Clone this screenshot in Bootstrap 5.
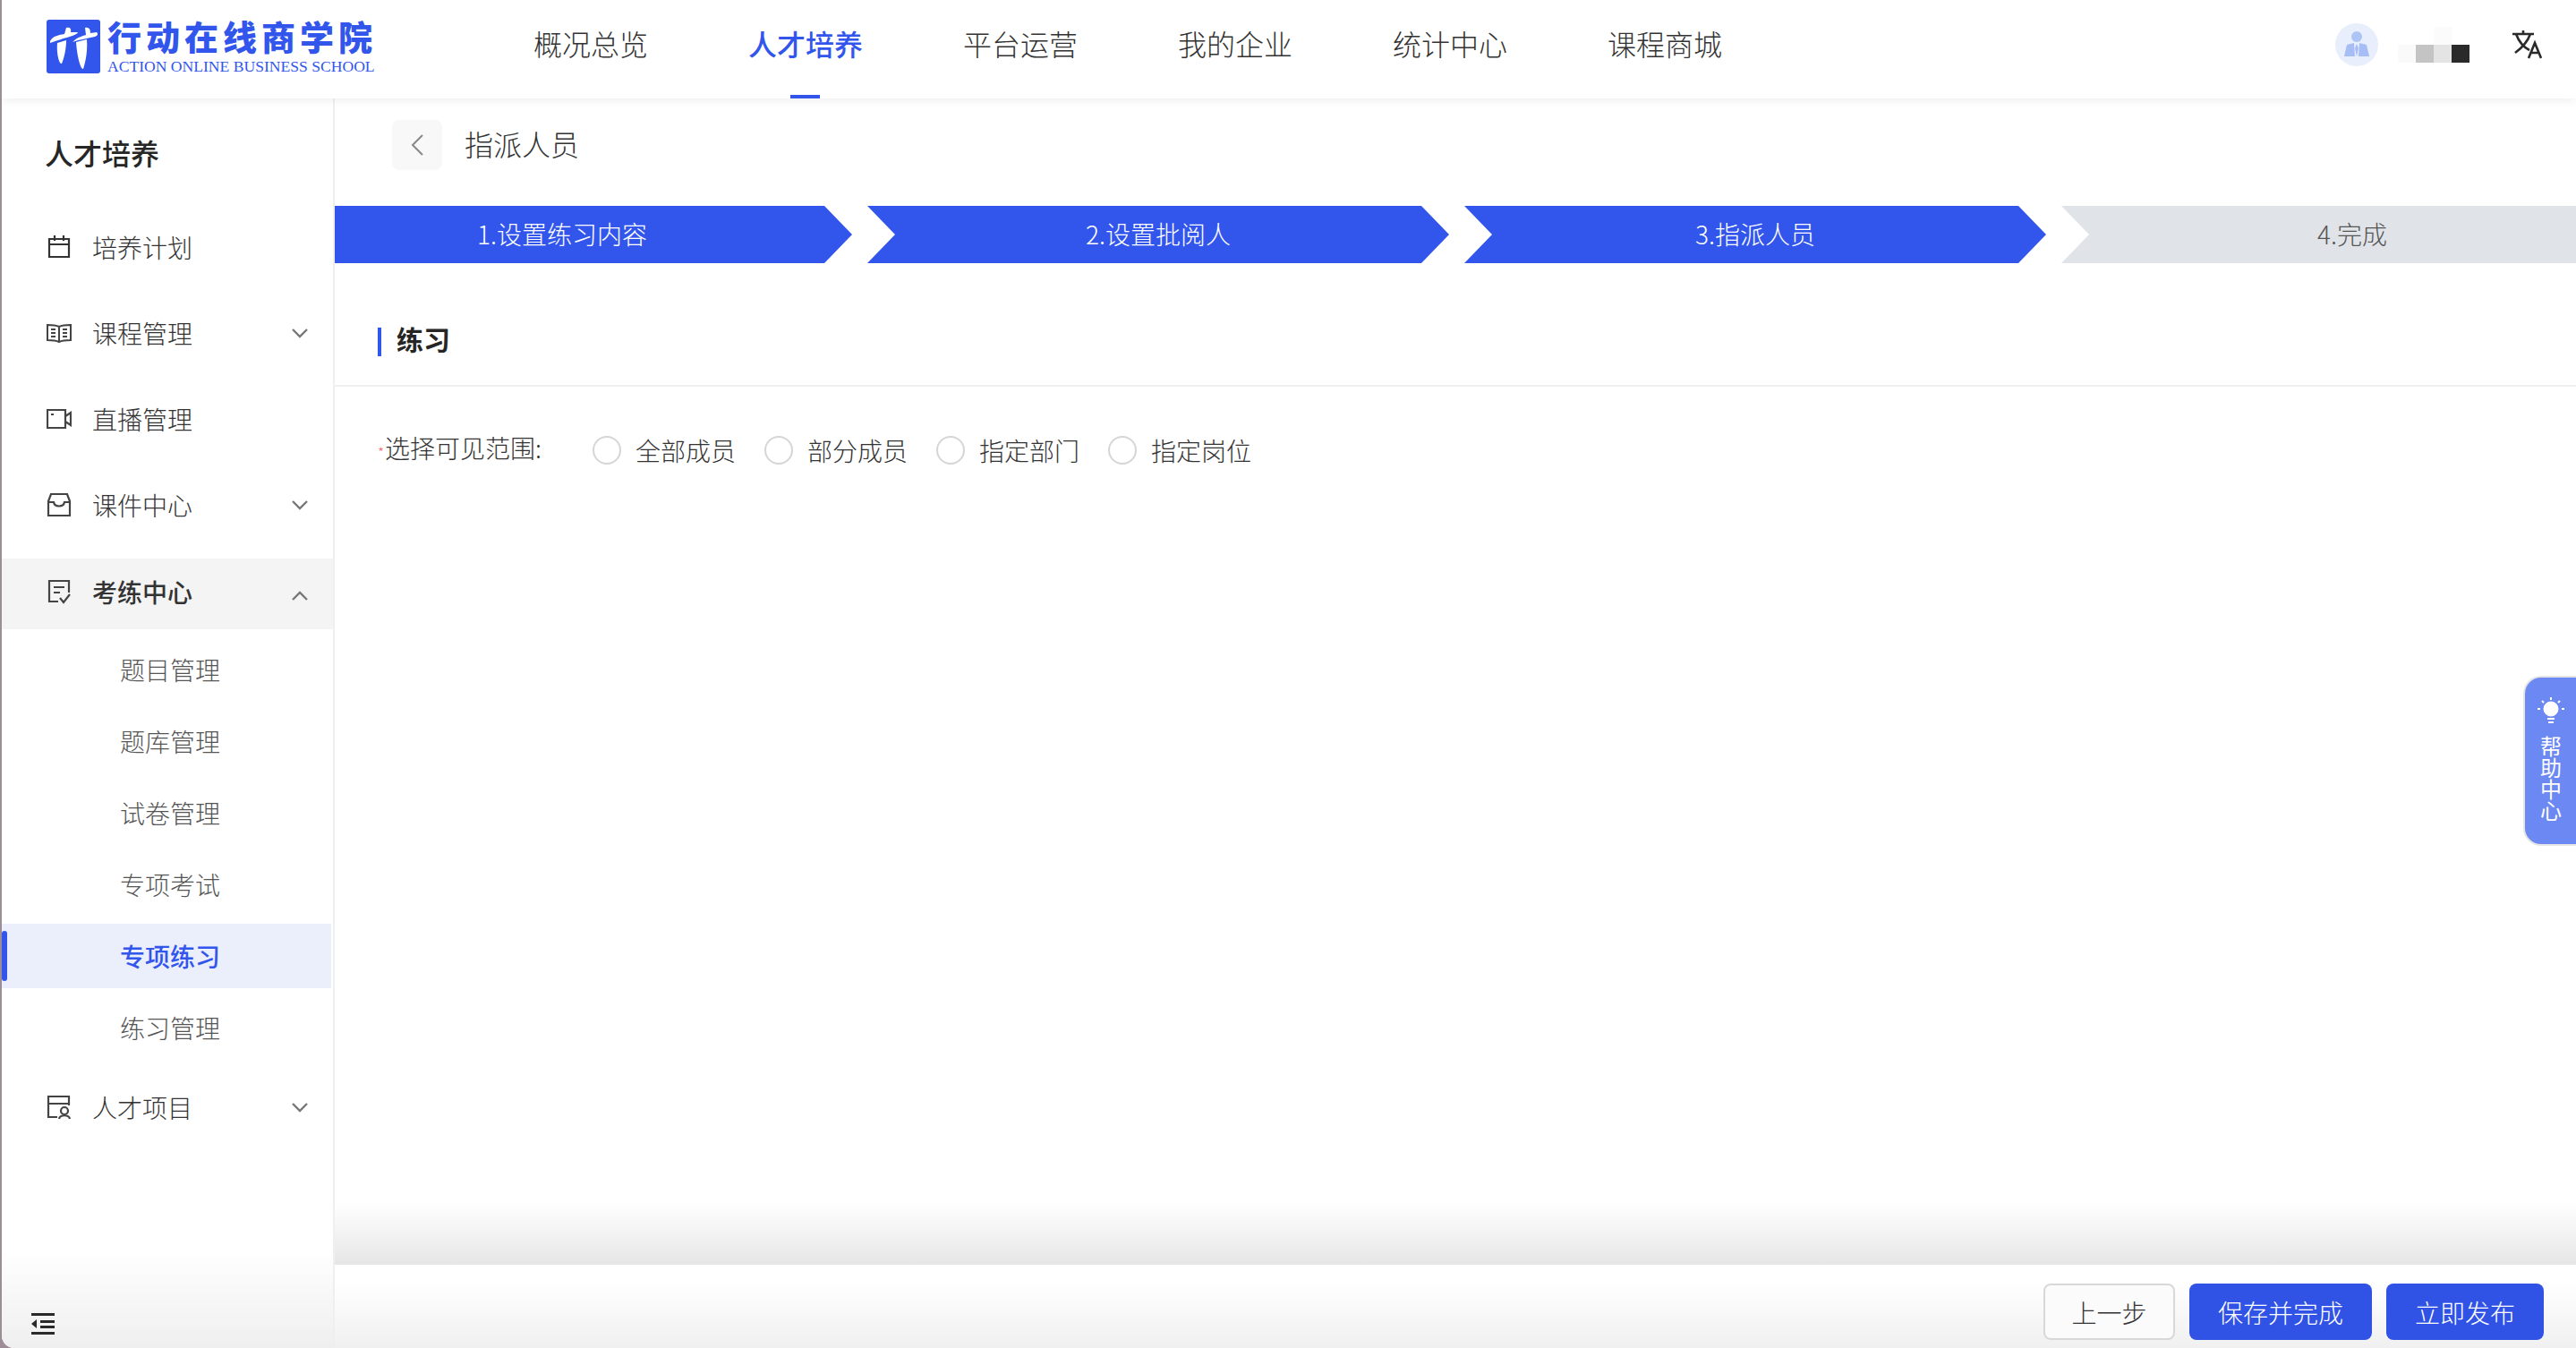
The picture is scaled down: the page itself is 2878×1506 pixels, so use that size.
<!DOCTYPE html>
<html lang="zh-CN">
<head>
<meta charset="UTF-8">
<meta name="viewport" content="width=device-width, initial-scale=1.0">
<link href="https://cdn.jsdelivr.net/npm/bootstrap@5.3.3/dist/css/bootstrap.min.css" rel="stylesheet">
<title>指派人员</title>
<style>
html, body { height: 100%; }
body { font-family: "Noto Sans CJK SC", "Liberation Sans", sans-serif; color: #333; background: #9c8d97; overflow: hidden; font-size: 28px; padding-left: 2px; }
.app-shell { height: 1506px; background: #fff; border-bottom-left-radius: 14px; overflow: hidden; }
.top-head { height: 110px; flex: none; box-shadow: 0 2px 10px rgba(0,0,0,.07); position: relative; z-index: 3; background: #fff; }
.logo-box { margin-left: 50px; width: 366px; margin-bottom: 6px; }
.logo-mark { width: 60px; height: 60px; flex: none; }
.logo-cn { font-size: 38px; font-weight: 900; color: #3256ec; line-height: 36px; letter-spacing: 5px; white-space: nowrap; }
.logo-en { font-family: "Liberation Serif", serif; font-size: 17.6px; color: #3256ec; line-height: 16px; margin-top: 8px; white-space: nowrap; }
.top-nav { margin-left: 178px; gap: 112px; height: 110px; }
.top-link { font-size: 32px; color: #333; line-height: 96px; height: 110px; position: relative; text-decoration: none; font-weight: 300; }
.top-link.on { color: #3256ec; font-weight: 500; }
.top-link.on::after { content: ""; position: absolute; left: 47px; bottom: 0; width: 33px; height: 4px; background: #3256ec; }
.head-right { margin-left: auto; margin-right: 38px; margin-bottom: 10px; }
.avatar-dot { width: 48px; height: 48px; border-radius: 50%; background: #e8eefc; }
.mosaic-box { display: grid; grid-template-columns: repeat(4, 20px); grid-template-rows: repeat(2, 20px); margin: 0 47px 0 22px; }
.side-menu { width: 372px; flex: none; border-right: 2px solid #efefef; background: linear-gradient(to bottom, #fff 92%, #efefef 100%); position: relative; }
.side-title { font-size: 32px; font-weight: 500; color: #262626; line-height: 44px; padding: 38px 0 0 48px; margin-bottom: 44px; }
.side-row { height: 80px; flex: none; margin-bottom: 16px; padding-left: 50px; padding-right: 28px; color: #333; font-weight: 300; }
.side-row svg.ico { width: 28px; height: 28px; flex: none; margin-right: 23px; }
.side-row .chev { margin-left: auto; width: 18px; height: 12px; }
.side-row.open { background: #f4f4f4; font-weight: 500; margin-top: 4px; height: 79px; margin-bottom: 9px; padding-bottom: 6px; }
.side-row.open .chev { margin-top: 10px; }
.sub-row { height: 72px; flex: none; margin-bottom: 8px; padding-left: 132px; color: #555; font-weight: 300; position: relative; }
.sub-row.on { background: #ebeefb; color: #3256ec; font-weight: 500; margin-right: 2px; }
.sub-row.on::before { content: ""; position: absolute; left: 0; top: 8px; width: 6px; height: 56px; border-radius: 3px; background: #3256ec; }
.sub-row.last { margin-bottom: 13px; }
.fold-ico { position: absolute; left: 33px; bottom: 15px; width: 28px; height: 24px; }
.main-pane { min-width: 0; overflow: hidden; position: relative; }
.page-head { height: 120px; padding: 24px 0 0 64px; }
.back-btn { width: 56px; height: 56px; background: #f8f8f9; border-radius: 8px; }
.page-name { font-size: 32px; font-weight: 300; margin-left: 25px; padding-top: 2px; color: #333; }
.step-line { gap: 17px; overflow: hidden; }
.step-item { flex: 0 0 650px; height: 64px; line-height: 63px; text-align: center; color: #fff; background: #3256ec; font-size: 28px; font-weight: 300; clip-path: polygon(0 0, 619px 0, 650px 50%, 619px 100%, 0 100%, 31px 50%); }
.step-item.first { flex: 0 0 578px; padding-right: 70px; clip-path: polygon(0 0, 547px 0, 578px 50%, 547px 100%, 0 100%); }
.step-item.todo { background: #e0e3e8; color: #555; }
.sec-head { height: 138px; border-bottom: 2px solid #f0f0f0; padding: 40px 0 0 48px; }
.sec-mark { width: 4px; height: 32px; background: #3256ec; margin-right: 17px; }
.sec-name { font-size: 30px; font-weight: 700; color: #262626; padding-bottom: 7px; }
.scope-row { padding: 44px 0 0 48px; line-height: 48px; font-weight: 300; }
.req-star { color: #f56c6c; font-size: 16px; margin-right: 1px; }
.scope-label { width: 240px; flex: none; }
.radio-one { margin-right: 32px; }
.radio-dot { width: 32px; height: 32px; border: 2px solid #d5d5d5; border-radius: 50%; margin-right: 16px; background: #fff; }
.foot-fade { position: absolute; left: 0; right: 0; bottom: 93px; height: 70px; background: linear-gradient(to bottom, rgba(230,230,230,0), #e6e6e6); }
.foot-bar { position: absolute; left: 0; right: 0; bottom: 0; height: 93px; background: linear-gradient(to bottom, #fff 20%, #f0f0f0 100%); padding-right: 36px; gap: 16px; padding-top: 21px; }
.btn-back { width: 147px; height: 63px; border: 2px solid #d8d8d8; border-radius: 8px; background: #fbfbfb; color: #333; font-size: 28px; font-weight: 300; padding: 0; }
.btn-blue { height: 63px; border-radius: 8px; background: #3053e6; color: #fff; font-size: 28px; font-weight: 300; padding: 0; border: 0; }
.help-tab { position: absolute; right: 0; top: 645px; width: 59px; height: 190px; background: #6c88f2; border: 2px solid #e5e5e5; border-right: 0; border-radius: 20px 0 0 20px; color: #fff; font-size: 24px; line-height: 24px; z-index: 4; padding-top: 22px; }
.help-word { writing-mode: vertical-rl; margin-top: 13px; }
</style>
</head>
<body>
<div class="app-shell d-flex flex-column">
  <header class="top-head d-flex align-items-center">
    <div class="logo-box d-flex align-items-center gap-2">
      <svg class="logo-mark" viewBox="0 0 60 60"><rect width="60" height="60" rx="3" fill="#3256ec"/><path d="M4 24C7 18 14 17 20 16L22 9C26 8 28 10 27 14L35 14C34 18 20 20 4 26Z M29 25C35 19 41 18 44 17L43 9C47 8 49 10 49 15L56 14C58 16 57 18 54 19 46 21 37 22 29 25Z M12 26L22 23C22 32 20 42 17 49 14 50 11 38 12 26Z M33 25L45 22C46 34 44 46 41 55 38 56 34 40 33 25Z" fill="#fff"/></svg>
      <div>
        <div class="logo-cn">行动在线商学院</div>
        <div class="logo-en">ACTION ONLINE BUSINESS SCHOOL</div>
      </div>
    </div>
    <nav class="top-nav d-flex">
      <a class="top-link" href="#">概况总览</a>
      <a class="top-link on" href="#">人才培养</a>
      <a class="top-link" href="#">平台运营</a>
      <a class="top-link" href="#">我的企业</a>
      <a class="top-link" href="#">统计中心</a>
      <a class="top-link" href="#">课程商城</a>
    </nav>
    <div class="head-right d-flex align-items-center">
      <div class="avatar-dot d-flex align-items-center justify-content-center">
        <svg width="28" height="32" viewBox="0 0 28 32"><circle cx="14" cy="7" r="6" fill="#adc4f6"/><path d="M0 29L3 16 11 14 12 29Z M28 29L25 16 17 14 16 29Z M14 15L16 20 14 29 12 20Z" fill="#a6bdf5"/></svg>
      </div>
      <div class="mosaic-box">
        <span></span><span></span><span style="background:#fbfbfb"></span><span></span>
        <span style="background:#fafafa"></span><span style="background:#c4c4c4"></span><span style="background:#e4e4e4"></span><span style="background:#2a2a2a"></span>
      </div>
      <svg width="34" height="32" viewBox="0 0 34 32" fill="none" stroke="#2a2a2a" stroke-width="2.6"><path d="M1 4H25M13 0V4M5 4C8 12 14 19 20 22M21 4C18 12 11 20 4 25M19 31L26 14 33 31M22 25H30"/></svg>
    </div>
  </header>
  <div class="d-flex flex-grow-1" style="min-height:0">
    <aside class="side-menu d-flex flex-column">
      <div class="side-title">人才培养</div>
      <div class="side-row d-flex align-items-center">
        <svg class="ico" viewBox="0 0 28 28" fill="none" stroke="#333" stroke-width="2.2"><path d="M3 5H25V25H3ZM3 11H25M9 1V7M19 1V7"/></svg>培养计划
      </div>
      <div class="side-row d-flex align-items-center">
        <svg class="ico" viewBox="0 0 28 28" fill="none" stroke="#444" stroke-width="2"><path d="M14 7C10 5 5 5 1 5V22C5 22 10 22 14 24 18 22 23 22 27 22V5C23 5 18 5 14 7ZM14 7V24M5 10H10M5 14H10M5 18H10M18 10H23M18 14H23M18 18H23"/></svg>课程管理
        <svg class="chev" viewBox="0 0 18 12" fill="none" stroke="#777" stroke-width="2.4"><path d="M1 2L9 10 17 2"/></svg>
      </div>
      <div class="side-row d-flex align-items-center">
        <svg class="ico" viewBox="0 0 28 28" fill="none" stroke="#444" stroke-width="2.2"><path d="M1 4H21V24H1ZM21 11L27 7V21L21 17M5 9H8"/></svg>直播管理
      </div>
      <div class="side-row d-flex align-items-center">
        <svg class="ico" viewBox="0 0 28 28" fill="none" stroke="#444" stroke-width="2.2"><path d="M5 2H23L26 10V26H2V10ZM2 11H8C9 17 19 17 20 11H26"/></svg>课件中心
        <svg class="chev" viewBox="0 0 18 12" fill="none" stroke="#777" stroke-width="2.4"><path d="M1 2L9 10 17 2"/></svg>
      </div>
      <div class="side-row open d-flex align-items-center">
        <svg class="ico" viewBox="0 0 28 28" fill="none" stroke="#444" stroke-width="2.2"><path d="M13 25H3V2H25V15M8 9H20M8 15H15M15 21L19 26 26 17"/></svg>考练中心
        <svg class="chev" viewBox="0 0 18 12" fill="none" stroke="#777" stroke-width="2.4"><path d="M1 10L9 2 17 10"/></svg>
      </div>
      <div class="sub-row d-flex align-items-center">题目管理</div>
      <div class="sub-row d-flex align-items-center">题库管理</div>
      <div class="sub-row d-flex align-items-center">试卷管理</div>
      <div class="sub-row d-flex align-items-center">专项考试</div>
      <div class="sub-row on d-flex align-items-center">专项练习</div>
      <div class="sub-row last d-flex align-items-center">练习管理</div>
      <div class="side-row d-flex align-items-center">
        <svg class="ico" viewBox="0 0 28 28" fill="none" stroke="#444" stroke-width="2.2"><path d="M12 25H2V2H25V12M2 10H25"/><circle cx="20" cy="18" r="4"/><path d="M14 27C15 22 25 22 26 27"/></svg>人才项目
        <svg class="chev" viewBox="0 0 18 12" fill="none" stroke="#777" stroke-width="2.4"><path d="M1 2L9 10 17 2"/></svg>
      </div>
      <svg class="fold-ico" viewBox="0 0 28 24" fill="#2a2a2a"><rect y="0" width="26" height="3"/><rect x="10" y="8" width="16" height="3"/><rect x="10" y="14" width="16" height="3"/><rect y="21" width="26" height="3"/><path d="M6 7V17L0 12Z"/></svg>
    </aside>
    <main class="main-pane flex-grow-1">
      <div class="page-head d-flex align-items-start">
        <div class="back-btn d-flex align-items-center justify-content-center">
          <svg width="16" height="24" viewBox="0 0 16 24" fill="none" stroke="#888" stroke-width="2"><path d="M14 1L3 12 14 23"/></svg>
        </div>
        <div class="page-name">指派人员</div>
      </div>
      <div class="step-line d-flex">
        <div class="step-item first">1.设置练习内容</div>
        <div class="step-item">2.设置批阅人</div>
        <div class="step-item">3.指派人员</div>
        <div class="step-item todo">4.完成</div>
      </div>
      <div class="sec-head d-flex align-items-center">
        <span class="sec-mark"></span><span class="sec-name">练习</span>
      </div>
      <div class="scope-row d-flex align-items-center">
        <div class="scope-label"><span class="req-star">*</span>选择可见范围:</div>
        <div class="radio-one d-flex align-items-center"><span class="radio-dot"></span>全部成员</div>
        <div class="radio-one d-flex align-items-center"><span class="radio-dot"></span>部分成员</div>
        <div class="radio-one d-flex align-items-center"><span class="radio-dot"></span>指定部门</div>
        <div class="radio-one d-flex align-items-center"><span class="radio-dot"></span>指定岗位</div>
      </div>
      <div class="foot-fade"></div>
      <div class="foot-bar d-flex justify-content-end">
        <button class="btn btn-back" type="button">上一步</button>
        <button class="btn btn-blue" type="button" style="width:204px">保存并完成</button>
        <button class="btn btn-blue" type="button" style="width:176px">立即发布</button>
      </div>
      <div class="help-tab d-flex flex-column align-items-center">
        <svg width="30" height="30" viewBox="0 0 30 30" fill="#fff" stroke="#fff"><circle cx="15" cy="13" r="8"/><path d="M11 24H19M12 28H18M15 0V3M3 13H0M30 13H27M5 4L7 6M25 4L23 6" fill="none" stroke-width="2"/></svg>
        <div class="help-word">帮助中心</div>
      </div>
    </main>
  </div>
</div>
</body>
</html>
